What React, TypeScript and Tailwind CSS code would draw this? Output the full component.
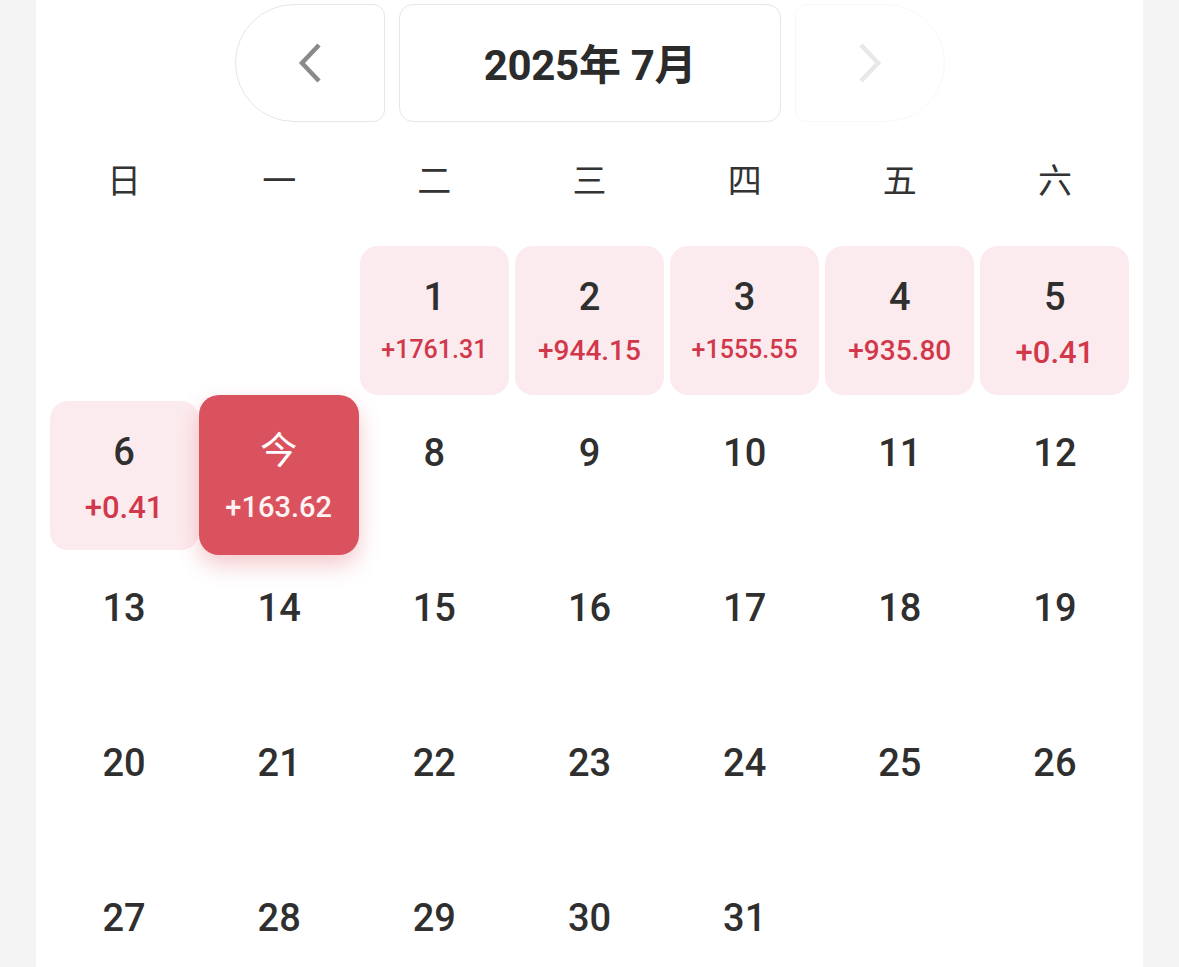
import React from 'react';

type Day = { day: number; amount?: string };

const WEEKDAYS = ['日', '一', '二', '三', '四', '五', '六'];

const AMOUNTS: Record<number, string> = {
  1: '+1761.31',
  2: '+944.15',
  3: '+1555.55',
  4: '+935.80',
  5: '+0.41',
  6: '+0.41',
  7: '+163.62',
};

const TODAY = 7;
const FIRST_WEEKDAY = 2; // 2025-07-01 is a Tuesday

const amountSize = (s: string) => {
  if (s.length >= 8) return 'text-[25px]';
  if (s.length === 7) return 'text-[28px]';
  return 'text-[31px]';
};

const Chevron = ({ dir, color }: { dir: 'left' | 'right'; color: string }) => (
  <svg width="30" height="42" viewBox="0 0 30 42" fill="none">
    <path
      d={dir === 'left' ? 'M24 3 L7 21 L24 39' : 'M6 3 L23 21 L6 39'}
      stroke={color}
      strokeWidth="4.5"
      strokeLinecap="butt"
      strokeLinejoin="miter"
    />
  </svg>
);

const DayCell = ({ d }: { d: Day }) => {
  const isToday = d.day === TODAY;
  if (isToday) {
    return (
      <div className="h-[155px] p-[3px] relative">
        <div className="absolute left-[-3px] top-[-3px] w-[160px] h-[160px] rounded-[20px] bg-[#d9525e] shadow-[0_10px_22px_rgba(222,90,100,0.32)] flex flex-col items-center justify-center text-white">
          <span className="text-[37px] leading-none mt-[2px]" style={{ fontFamily: '"Noto Sans CJK SC", sans-serif' }}>今</span>
          <span className="text-[29px] font-medium leading-none mt-[26px] text-[#fff2f3]">{d.amount}</span>
        </div>
      </div>
    );
  }
  if (d.amount) {
    return (
      <div className="h-[155px] p-[3px]">
        <div className="h-[149px] rounded-[18px] bg-[#fcebee] flex flex-col items-center pt-[32px]">
          <span className="text-[38px] font-medium leading-none text-[#2f2f2f]">{d.day}</span>
          <span className={`${amountSize(d.amount)} font-medium leading-none mt-[21px] text-[#d2384b]`}>{d.amount}</span>
        </div>
      </div>
    );
  }
  return (
    <div className="h-[155px] p-[3px]">
      <div className="h-[149px] flex flex-col items-center pt-[33px]">
        <span className="text-[38px] font-medium leading-none text-[#2f2f2f]">{d.day}</span>
      </div>
    </div>
  );
};

export default function App() {
  const cells: (Day | null)[] = [];
  for (let i = 0; i < FIRST_WEEKDAY; i++) cells.push(null);
  for (let i = 1; i <= 31; i++) cells.push({ day: i, amount: AMOUNTS[i] });

  return (
    <div
      className="w-[1179px] h-[967px] bg-[#f4f4f4] overflow-hidden flex justify-center"
      style={{ fontFamily: 'Roboto, "Noto Sans CJK SC", sans-serif' }}
    >
      <div className="w-[1107px] ml-[-1px] bg-white px-[10px] pt-[4px]">
        {/* Month switcher */}
        <div className="flex justify-center gap-[14px] h-[118px] ml-[2px]">
          <button className="w-[150px] h-full rounded-l-[60px] rounded-r-[12px] border border-[#e6e6e6] bg-white flex items-center justify-center">
            <Chevron dir="left" color="#8a8a8a" />
          </button>
          <div className="w-[382px] h-full rounded-[14px] border border-[#e6e6e6] flex items-center justify-center">
            <span className="text-[42px] font-bold text-[#2b2b2b] tracking-[-0.3px] mt-[4px]">2025年 7月</span>
          </div>
          <button className="w-[150px] h-full rounded-r-[60px] rounded-l-[12px] border border-[#f8f8f8] bg-white flex items-center justify-center">
            <Chevron dir="right" color="#e8e8e8" />
          </button>
        </div>

        {/* Weekdays */}
        <div className="grid grid-cols-7 h-[121px] items-center ml-[1px]" style={{ fontFamily: '"Noto Sans CJK SC", sans-serif' }}>
          {WEEKDAYS.map(w => (
            <div key={w} className="text-center text-[34px] text-[#333] pb-[8px]">{w}</div>
          ))}
        </div>

        {/* Days */}
        <div className="grid grid-cols-7 ml-[1px]">
          {cells.map((c, i) =>
            c ? <DayCell key={i} d={c} /> : <div key={i} className="h-[155px]" />
          )}
        </div>
      </div>
    </div>
  );
}
